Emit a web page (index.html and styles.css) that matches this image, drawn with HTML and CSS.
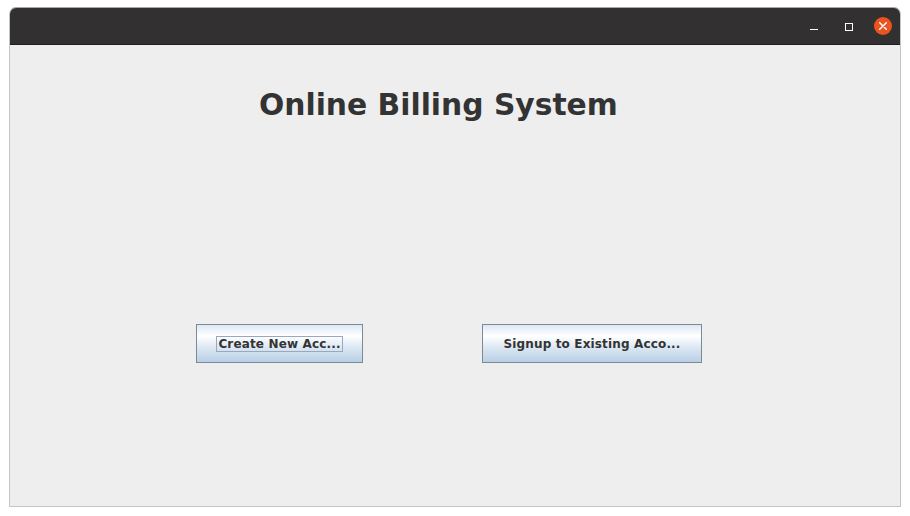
FILE: index.html
```html
<!DOCTYPE html>
<html>
<head>
<meta charset="utf-8">
<link rel="stylesheet" href="styles.css">
</head>
<body>
<div class="window">
  <div class="titlebar">
    <div class="controls">
      <span class="ctl min"><span class="min-line"></span></span>
      <span class="ctl max"><span class="max-box"></span></span>
      <span class="ctl close">
        <svg width="18" height="18" viewBox="0 0 18 18"><circle cx="9" cy="9" r="9" fill="#e95420"/><path d="M5.7 5.7 L12.3 12.3 M12.3 5.7 L5.7 12.3" stroke="#fff" stroke-width="1.4" stroke-linecap="round"/></svg>
      </span>
    </div>
  </div>
  <div class="content">
    <h1 class="heading">Online Billing System</h1>
    <div class="buttons">
      <button class="btn btn-create"><span class="focus">Create New Acc...</span></button>
      <button class="btn btn-signup">Signup to Existing Acco...</button>
    </div>
  </div>
</div>
</body>
</html>
```
FILE: styles.css
```css
html, body {
  margin: 0;
  padding: 0;
  background: #ffffff;
}
body {
  padding: 7px 9px 0 9px;
  font-family: "DejaVu Sans", sans-serif;
}
.window {
  width: 890px;
  height: 498px;
  border: 1px solid #c4c4c4;
  border-top-color: #a8a8a8;
  border-radius: 7px 7px 0 0;
  background: #eeeeee;
  display: flex;
  flex-direction: column;
  overflow: hidden;
}
.titlebar {
  height: 36px;
  background: #323031;
  border-bottom: 1px solid #1f1e1e;
  display: flex;
  justify-content: flex-end;
  align-items: center;
}
.controls {
  display: flex;
  align-items: center;
  padding-right: 8px;
}
.ctl {
  display: flex;
  align-items: center;
  justify-content: center;
}
.min {
  width: 8px;
  height: 18px;
  margin-right: 27px;
}
.min-line {
  display: block;
  width: 8px;
  height: 1px;
  background: #ffffff;
  margin-top: 6px;
}
.max {
  width: 8px;
  height: 18px;
  margin-right: 21px;
}
.max-box {
  display: block;
  width: 6px;
  height: 6px;
  border: 1px solid #ffffff;
  margin-top: 1px;
}
.close {
  width: 18px;
  height: 18px;
}
.close svg { display: block; }
.content {
  flex: 1;
  display: flex;
  flex-direction: column;
}
.heading {
  margin: 42px 0 0 249px;
  font-size: 29.75px;
  font-weight: bold;
  color: #333333;
  line-height: 35px;
}
.buttons {
  display: flex;
  margin-top: 202px;
  padding-left: 186px;
}
.btn {
  height: 39px;
  border: 1px solid #7a8a99;
  border-radius: 0;
  padding: 0;
  font-family: "DejaVu Sans", sans-serif;
  font-size: 12px;
  letter-spacing: 0.15px;
  font-weight: bold;
  color: #333333;
  background: linear-gradient(to bottom, #dde8f3 0%, #ffffff 30%, #dde8f3 60%, #b8cfe5 100%);
  display: flex;
  align-items: center;
  justify-content: center;
}
.btn-create {
  width: 167px;
}
.btn-signup {
  width: 220px;
  margin-left: 119px;
}
.focus {
  border: 1px solid #99a8c0;
  padding: 0 1px;
  line-height: 14px;
}
```
